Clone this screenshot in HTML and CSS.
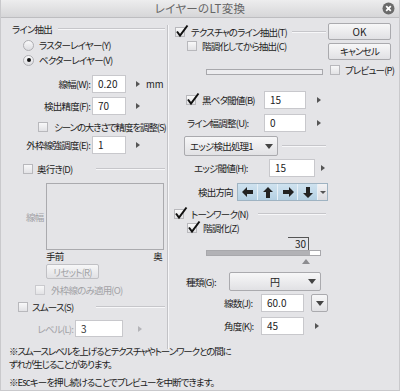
FILE: index.html
```html
<html>
    <head>
        <meta charset="utf-8">
        <link rel="stylesheet" href="styles.css">
        <title>レイヤーのLT変換</title>
    </head>

    <body>
        <div class="dialog">
            <div class="titlebar">
                <span class="title">レイヤーのLT変換</span>
                <span class="close">
                    <svg width="13" height="13" viewBox="0 0 13 13">
                        <circle cx="6.5" cy="6.5" r="6" fill="#6b6b6b"/>
                        <path d="M4.2 4.2 L8.8 8.8 M8.8 4.2 L4.2 8.8" stroke="#fff" stroke-width="1.8"/>
                    </svg>
                </span>
            </div>

            <div class="content">
                <!-- left column -->
                <div class="col-left">
                    <div class="group g-line">
                        <span>ライン抽出</span><span class="rule"></span>
                    </div>
                    <div class="row r-radio1"><span class="rb"></span><span>ラスターレイヤー(Y)</span></div>
                    <div class="row r-radio2"><span class="rb on"></span><span>ベクターレイヤー(V)</span></div>

                    <div class="row field r-width">
                        <span class="lbl">線幅(W):</span>
                        <span class="input">0.20</span>
                        <span class="tri"></span>
                        <span class="unit">mm</span>
                    </div>
                    <div class="row field r-prec">
                        <span class="lbl">検出精度(F):</span>
                        <span class="input">70</span>
                        <span class="tri"></span>
                    </div>
                    <div class="row r-scene"><span class="cb"></span><span>シーンの大きさで精度を調整(S)</span></div>
                    <div class="row field r-outer">
                        <span class="lbl">外枠線強調度(E):</span>
                        <span class="input">1</span>
                        <span class="tri"></span>
                    </div>

                    <div class="group g-depth">
                        <span class="cb"></span><span class="gtext">奥行き(D)</span><span class="rule"></span>
                    </div>
                    <div class="graph-row">
                        <span class="graph-lbl">線幅</span>
                        <div class="graph"></div>
                    </div>
                    <div class="axis"><span>手前</span><span>奥</span></div>
                    <div class="btn reset">リセット(R)</div>
                    <div class="row r-outeronly off"><span class="cb"></span><span>外枠線のみ適用(O)</span></div>

                    <div class="group g-smooth">
                        <span class="cb"></span><span class="gtext">スムース(S)</span><span class="rule"></span>
                    </div>
                    <div class="row field r-level off">
                        <span class="lbl">レベル(L):</span>
                        <span class="input">3</span>
                        <span class="tri"></span>
                    </div>
                </div>

                <!-- middle column -->
                <div class="col-mid">
                    <div class="group g-texture">
                        <span class="cb checked"><svg class="tick" width="14" height="14" viewBox="0 0 14 14"><path d="M2 7.5 L5 11.5 L12.5 1.5" fill="none" stroke="#111" stroke-width="2"/></svg></span>
                        <span class="gtext">テクスチャのライン抽出(T)</span><span class="rule"></span>
                    </div>
                    <div class="row r-grad"><span class="cb"></span><span>階調化してから抽出(C)</span></div>
                    <div class="slider s-empty"></div>

                    <div class="row field r-black">
                        <span class="lbl">
                            <span class="cb checked"><svg class="tick" width="14" height="14" viewBox="0 0 14 14"><path d="M2 7.5 L5 11.5 L12.5 1.5" fill="none" stroke="#111" stroke-width="2"/></svg></span>
                            <span>黒ベタ閾値(B)</span>
                        </span>
                        <span class="input">15</span>
                        <span class="tri"></span>
                    </div>
                    <div class="row field r-linew">
                        <span class="lbl">ライン幅調整(U):</span>
                        <span class="input">0</span>
                        <span class="tri"></span>
                    </div>

                    <div class="group g-edge">
                        <span class="btn select edge-sel">エッジ検出処理1<span class="down"></span></span>
                        <span class="rule"></span>
                    </div>
                    <div class="row field r-edge">
                        <span class="lbl">エッジ閾値(H):</span>
                        <span class="input">15</span>
                        <span class="tri"></span>
                    </div>
                    <div class="row r-dir">
                        <span class="lbl">検出方向</span>
                        <span class="dirs">
                            <span class="dir"><svg width="12" height="10" viewBox="0 0 12 10"><path d="M0 5 L5 0 L5 3 L11 3 L11 7 L5 7 L5 10 Z" fill="#222"/></svg></span>
                            <span class="dir"><svg width="10" height="11" viewBox="0 0 10 11"><path d="M5 0 L10 5 L7 5 L7 11 L3 11 L3 5 L0 5 Z" fill="#222"/></svg></span>
                            <span class="dir"><svg width="12" height="10" viewBox="0 0 12 10"><path d="M12 5 L7 0 L7 3 L1 3 L1 7 L7 7 L7 10 Z" fill="#222"/></svg></span>
                            <span class="dir"><svg width="10" height="11" viewBox="0 0 10 11"><path d="M5 11 L10 6 L7 6 L7 0 L3 0 L3 6 L0 6 Z" fill="#222"/></svg></span>
                            <span class="dir-more"><span class="down small"></span></span>
                        </span>
                    </div>

                    <div class="group g-tone">
                        <span class="cb checked"><svg class="tick" width="14" height="14" viewBox="0 0 14 14"><path d="M2 7.5 L5 11.5 L12.5 1.5" fill="none" stroke="#111" stroke-width="2"/></svg></span>
                        <span class="gtext">トーンワーク(N)</span><span class="rule"></span>
                    </div>
                    <div class="row r-grad2">
                        <span class="cb checked"><svg class="tick" width="14" height="14" viewBox="0 0 14 14"><path d="M2 7.5 L5 11.5 L12.5 1.5" fill="none" stroke="#111" stroke-width="2"/></svg></span>
                        <span>階調化(Z)</span>
                    </div>
                    <div class="slider-block">
                        <div class="s-value"><span>30</span></div>
                        <div class="slider s-fill"><span class="fill" style="width: 103px"></span></div>
                        <div class="s-thumb"></div>
                    </div>

                    <div class="row r-kind">
                        <span class="lbl">種類(G):</span>
                        <span class="btn select kind-sel"><span class="sel-text">円</span><span class="down"></span></span>
                    </div>
                    <div class="row field r-lines">
                        <span class="lbl">線数(J):</span>
                        <span class="input">60.0</span>
                        <span class="btn drop"><span class="down"></span></span>
                    </div>
                    <div class="row field r-angle">
                        <span class="lbl">角度(K):</span>
                        <span class="input">45</span>
                        <span class="tri"></span>
                    </div>
                </div>

                <!-- right column -->
                <div class="col-right">
                    <div class="btn action ok">OK</div>
                    <div class="btn action cancel">キャンセル</div>
                    <div class="row r-preview"><span class="cb"></span><span>プレビュー(P)</span></div>
                </div>
            </div>

            <div class="notes">
                <p>※スムースレベルを上げるとテクスチャやトーンワークとの間に<br>ずれが生じることがあります。</p>
                <p class="esc">※Escキーを押し続けることでプレビューを中断できます。</p>
            </div>
        </div>
    </body>
</html>
```

FILE: styles.css
```css
body{
    margin: 0;
    background-color: #e4e4e7;
    font-family: "Noto Sans CJK JP", "Noto Sans", sans-serif;
    font-size: 9.5px;
    letter-spacing: -0.8px;
    font-feature-settings: "palt";
    color: #222;
}

.dialog{
    width: 400px;
    height: 391px;
    box-sizing: border-box;
    border-left: 1px solid #c9c9cc;
    border-right: 1px solid #c9c9cc;
    border-bottom: 1px solid #c9c9cc;
    overflow: hidden;
}

.titlebar{
    height: 18px;
    box-sizing: border-box;
    display: flex;
    justify-content: center;
    align-items: center;
    position: relative;
    background: linear-gradient(#ededee, #d6d6d8);
    border-bottom: 1px solid #bdbdc0;
}

.title{
    color: #666;
    font-size: 11.5px;
    letter-spacing: 0.3px;
    line-height: 17px;
}

.close{
    position: absolute;
    right: 4px;
    top: 2px;
    height: 13px;
}

.content{
    display: flex;
    height: 327px;
}

.col-left{
    width: 166px;
    border-right: 1px solid #c2c2c6;
    box-shadow: 1px 0 0 #f6f6f8;
    margin-top: 7px;
    height: 324px;
    align-self: flex-start;
}

.col-left > :first-child{
    margin-top: -3px;
}

.col-mid{
    width: 158px;
    margin-left: 2px;
    margin-top: -1px;
}

.col-right{
    width: 64px;
    margin-top: -1px;
}

/* generic rows */
.row{
    display: flex;
    align-items: center;
    height: 14px;
    line-height: 14px;
    white-space: nowrap;
}

.field{
    height: 18px;
}

.group{
    display: flex;
    align-items: center;
    height: 14px;
    line-height: 14px;
    white-space: nowrap;
}

.rule{
    flex: 1;
    height: 0;
    border-top: 1px solid #c6c6ca;
    border-bottom: 1px solid #f7f7f9;
}

.off{
    color: #a2a2a6;
}

.lbl{
    display: flex;
    align-items: center;
}

.input{
    height: 18px;
    box-sizing: border-box;
    background-color: white;
    border: 1px solid #c8c8cc;
    padding-left: 5px;
    line-height: 16px;
    font-size: 10px;
    letter-spacing: 0;
}

.tri{
    width: 0;
    height: 0;
    border-left: 4px solid #555;
    border-top: 3px solid transparent;
    border-bottom: 3px solid transparent;
}

.off .tri{
    border-left-color: #b4b4b8;
}

.off .input{
    color: #333;
}

/* checkbox and radio */
.cb{
    display: inline-block;
    position: relative;
    flex: none;
    width: 10px;
    height: 10px;
    box-sizing: border-box;
    border: 1px solid #b8b8bc;
    background: linear-gradient(#f8f8f9, #e2e2e5);
}

.tick{
    position: absolute;
    left: -1px;
    top: -4px;
}

.rb{
    display: inline-block;
    position: relative;
    flex: none;
    width: 11px;
    height: 11px;
    box-sizing: border-box;
    border-radius: 50%;
    border: 1px solid #aeaeb2;
    background: linear-gradient(#f9f9fa, #dcdce0);
}

.rb.on::after{
    content: "";
    position: absolute;
    left: 2.5px;
    top: 2.5px;
    width: 4px;
    height: 4px;
    border-radius: 50%;
    background-color: #111;
}

/* buttons */
.btn{
    display: flex;
    align-items: center;
    justify-content: center;
    box-sizing: border-box;
    border: 1px solid #aaaaae;
    border-radius: 2px;
    background: linear-gradient(#f7f7f8, #e1e1e4);
    white-space: nowrap;
}

.down{
    width: 0;
    height: 0;
    border-top: 5px solid #444;
    border-left: 4px solid transparent;
    border-right: 4px solid transparent;
}

.down.small{
    border-top-width: 3px;
    border-left-width: 3px;
    border-right-width: 3px;
    border-top-color: #555;
}

/* left column rows */
.g-line{
    padding-left: 11px;
    padding-right: 2px;
}

.g-line .rule{
    margin-left: 6px;
}

.r-radio1{
    margin-top: 2px;
    padding-left: 22px;
    gap: 5px;
}

.r-radio2{
    margin-top: 1px;
    padding-left: 22px;
    gap: 5px;
}

.r-width{
    margin-top: 8px;
}

.r-prec{
    margin-top: 4px;
}

.r-outer{
    margin-top: 2px;
}

.r-width .lbl, .r-prec .lbl, .r-outer .lbl{
    width: 89px;
    justify-content: flex-end;
}

.r-width .input, .r-prec .input, .r-outer .input{
    width: 34px;
    margin-left: 2px;
}

.r-width .tri, .r-prec .tri, .r-outer .tri{
    margin-left: 10px;
}

.unit{
    margin-left: 6px;
    letter-spacing: 0;
}

.r-scene{
    margin-top: 5px;
    padding-left: 37px;
    gap: 6px;
}

.r-scene span:last-child{
    letter-spacing: -1.1px;
}

.g-depth{
    margin-top: 8px;
    padding-left: 22px;
    padding-right: 2px;
}

.g-depth .gtext{
    margin-left: 4px;
    width: 59px;
}

.graph-row{
    display: flex;
    align-items: center;
    margin-top: 7px;
    height: 67px;
}

.graph-lbl{
    width: 45px;
    padding-left: 25px;
    box-sizing: border-box;
    color: #a2a2a6;
}

.graph{
    width: 118px;
    height: 67px;
    box-sizing: border-box;
    border: 1px solid #aaaaae;
}

.axis{
    display: flex;
    justify-content: space-between;
    margin-left: 45px;
    width: 116px;
    height: 12px;
    line-height: 12px;
}

.reset{
    margin-top: 2px;
    margin-left: 45px;
    width: 53px;
    height: 15px;
    color: #a2a2a6;
    border-color: #c0c0c4;
}

.r-outeronly{
    margin-top: 4px;
    padding-left: 34px;
    gap: 6px;
}

.r-outeronly .cb{
    border-color: #cacace;
}

.g-smooth{
    margin-top: 3px;
    padding-left: 17px;
    padding-right: 2px;
}

.g-smooth .gtext{
    margin-left: 4px;
    width: 64px;
}

.r-level{
    margin-top: 6px;
    height: 17px;
}

.r-level .lbl{
    width: 72px;
    justify-content: flex-end;
}

.r-level .input{
    width: 48px;
    height: 17px;
    margin-left: 2px;
}

.r-level .tri{
    margin-left: 15px;
}

/* middle column rows */
.g-texture{
    margin-top: 8px;
    padding-left: 5px;
    padding-right: 2px;
}

.g-texture .gtext{
    margin-left: 6px;
    margin-right: 5px;
}

.r-grad{
    padding-left: 17px;
    gap: 5px;
}

.slider{
    margin-left: 36px;
    height: 6px;
    box-sizing: border-box;
    border: 1px solid #a8a8ac;
    background-color: #ececef;
    display: flex;
}

.s-empty{
    margin-top: 16px;
    width: 117px;
}

.r-black{
    margin-top: 16px;
}

.r-black .lbl{
    width: 94px;
    padding-left: 16px;
    box-sizing: border-box;
    gap: 6px;
}

.r-black .input, .r-linew .input{
    width: 42px;
}

.r-black .tri, .r-linew .tri, .r-angle .tri{
    margin-left: 11px;
}

.r-linew{
    margin-top: 5px;
}

.r-linew .lbl{
    width: 94px;
    padding-left: 17px;
    box-sizing: border-box;
}

.g-edge{
    margin-top: 4px;
    height: 20px;
    padding-left: 14px;
    padding-right: 2px;
}

.select{
    justify-content: space-between;
    height: 20px;
    padding: 0 4px 0 5px;
}

.edge-sel{
    width: 94px;
}

.g-edge .rule{
    margin-left: 4px;
}

.r-edge{
    margin-top: 3px;
}

.r-edge .lbl{
    width: 99px;
    padding-left: 24px;
    box-sizing: border-box;
}

.r-edge .input{
    width: 46px;
}

.r-edge .tri{
    margin-left: 6px;
}

.r-dir{
    margin-top: 6px;
    height: 18px;
}

.r-dir .lbl{
    width: 73px;
    padding-left: 28px;
    box-sizing: border-box;
}

.dirs{
    display: flex;
    height: 18px;
    border: 1px solid #9fb3c2;
    box-sizing: border-box;
}

.dir{
    width: 19px;
    display: flex;
    align-items: center;
    justify-content: center;
    background: linear-gradient(#cfe2ef, #b4d0e3);
    border-right: 1px solid #e8f0f6;
}

.dir-more{
    width: 9px;
    display: flex;
    align-items: center;
    justify-content: center;
    background: linear-gradient(#f2f2f4, #dcdce0);
}

.g-tone{
    margin-top: 6px;
    padding-left: 4px;
    padding-right: 2px;
}

.g-tone .gtext{
    margin-left: 7px;
    margin-right: 10px;
}

.r-grad2{
    padding-left: 17px;
    gap: 6px;
}

.slider-block{
    margin-top: 2px;
    height: 30px;
}

.s-value{
    margin-left: 118px;
    width: 21px;
    height: 13px;
    box-sizing: border-box;
    border-top: 1px solid #555;
    border-right: 1px solid #555;
    text-align: right;
    line-height: 12px;
    padding-right: 2px;
    font-size: 10px;
    letter-spacing: 0;
}

.s-fill{
    width: 115px;
    background-color: white;
}

.fill{
    background-color: #b2b2b6;
    height: 100%;
}

.s-thumb{
    margin-left: 132px;
    margin-top: 3px;
    width: 0;
    height: 0;
    border-bottom: 5px solid #8c8c90;
    border-left: 4px solid transparent;
    border-right: 4px solid transparent;
}

.r-kind{
    margin-top: 5px;
    height: 19px;
}

.r-kind .lbl{
    width: 59px;
    padding-left: 16px;
    box-sizing: border-box;
}

.kind-sel{
    width: 92px;
    height: 19px;
    font-size: 10px;
}

.sel-text{
    flex: 1;
    text-align: center;
    padding-left: 6px;
}

.r-lines{
    margin-top: 3px;
}

.r-lines .lbl, .r-angle .lbl{
    width: 91px;
    padding-left: 54px;
    box-sizing: border-box;
}

.r-lines .input, .r-angle .input{
    width: 43px;
}

.drop{
    margin-left: 7px;
    width: 17px;
    height: 18px;
}

.r-angle{
    margin-top: 5px;
}

/* right column */
.action{
    width: 63px;
    height: 17px;
    line-height: 15px;
}

.ok{
    margin-top: 6px;
    font-size: 10px;
    letter-spacing: 0;
}

.cancel{
    margin-top: 3px;
}

.r-preview{
    margin-top: 3px;
    padding-left: 2px;
    gap: 5px;
}

/* notes */
.notes{
    padding-left: 8px;
}

.notes p{
    margin: 0;
    line-height: 13px;
    letter-spacing: -1.1px;
}

.notes .esc{
    margin-top: 5px;
    letter-spacing: -0.9px;
}
```
